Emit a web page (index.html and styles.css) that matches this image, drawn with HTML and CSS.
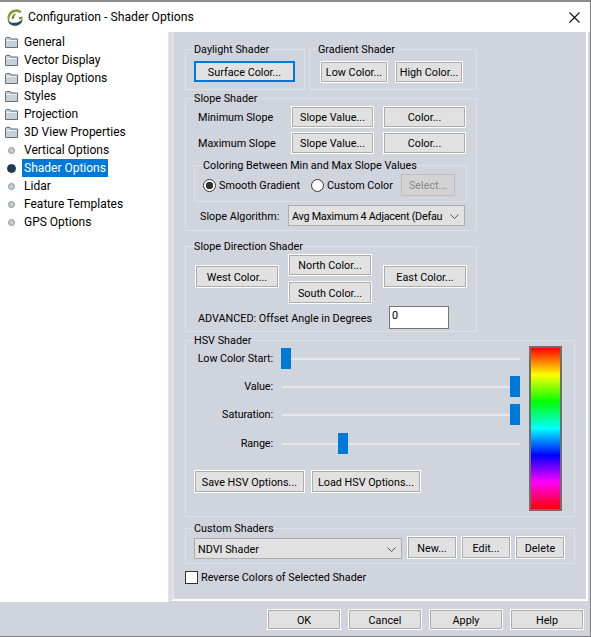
FILE: index.html
```html
<!DOCTYPE html>
<html lang="en">
<head>
<meta charset="utf-8">
<title>Configuration - Shader Options</title>
<link rel="stylesheet" href="styles.css">
</head>
<body>
<div class="window">
  <header class="titlebar">
    <svg class="logo" viewBox="0 0 16 17" width="16" height="17" aria-hidden="true">
      <path d="M10.5 0.2C5 -0.2 0.8 3.4 0.5 8.4 0.4 10.4 1.2 11.8 2.4 12.8 1.8 9.4 3.6 4 8 3.2 9.6 2.9 11.4 3.2 12.6 4.2L14.6 2.4C13.4 1.1 12 0.4 10.5 0.2Z" fill="#8a9a3c"/>
      <path d="M4.8 10.2C4.4 7.4 6.4 4.8 9.6 4.6 8.2 5.6 7 7.4 7 9.6L4.8 10.2Z" fill="#6f8a2c"/>
      <path d="M11.5 8.2L15.4 7.6C15.6 8.6 15.5 9.4 15.2 10.2L12.2 10.6C12.4 9.6 12.1 8.8 11.5 8.2Z" fill="#7c9434"/>
      <path d="M0.8 10.5C1.8 13.2 4.6 14 7.6 13.8 10.8 13.6 13.8 12.4 15.4 10 15.8 13.6 12.6 16.8 8 16.8 3.6 16.8 0.8 13.8 0.8 10.5Z" fill="#2d4a5c"/>
    </svg>
    <span class="title">Configuration - Shader Options</span>
    <svg class="close" viewBox="0 0 11 11" width="11" height="11" aria-hidden="true">
      <path d="M0.5 0.5L10.5 10.5M10.5 0.5L0.5 10.5" stroke="#111" stroke-width="1.1" fill="none"/>
    </svg>
  </header>
  <div class="main">
    <nav class="tree">
      <div class="node"><svg class="folder" viewBox="0 0 13 11" width="13" height="11" aria-hidden="true"><path d="M0.5 10.5V1.5Q0.5 0.5 1.5 0.5H5L6 2H12.5V10.5Z" fill="#c9d1d8" stroke="#5f6f78"/><path d="M1 3.5H12" stroke="#eef2f4"/></svg><span class="label">General</span></div>
      <div class="node"><svg class="folder" viewBox="0 0 13 11" width="13" height="11" aria-hidden="true"><path d="M0.5 10.5V1.5Q0.5 0.5 1.5 0.5H5L6 2H12.5V10.5Z" fill="#c9d1d8" stroke="#5f6f78"/><path d="M1 3.5H12" stroke="#eef2f4"/></svg><span class="label">Vector Display</span></div>
      <div class="node"><svg class="folder" viewBox="0 0 13 11" width="13" height="11" aria-hidden="true"><path d="M0.5 10.5V1.5Q0.5 0.5 1.5 0.5H5L6 2H12.5V10.5Z" fill="#c9d1d8" stroke="#5f6f78"/><path d="M1 3.5H12" stroke="#eef2f4"/></svg><span class="label">Display Options</span></div>
      <div class="node"><svg class="folder" viewBox="0 0 13 11" width="13" height="11" aria-hidden="true"><path d="M0.5 10.5V1.5Q0.5 0.5 1.5 0.5H5L6 2H12.5V10.5Z" fill="#c9d1d8" stroke="#5f6f78"/><path d="M1 3.5H12" stroke="#eef2f4"/></svg><span class="label">Styles</span></div>
      <div class="node"><svg class="folder" viewBox="0 0 13 11" width="13" height="11" aria-hidden="true"><path d="M0.5 10.5V1.5Q0.5 0.5 1.5 0.5H5L6 2H12.5V10.5Z" fill="#c9d1d8" stroke="#5f6f78"/><path d="M1 3.5H12" stroke="#eef2f4"/></svg><span class="label">Projection</span></div>
      <div class="node"><svg class="folder" viewBox="0 0 13 11" width="13" height="11" aria-hidden="true"><path d="M0.5 10.5V1.5Q0.5 0.5 1.5 0.5H5L6 2H12.5V10.5Z" fill="#c9d1d8" stroke="#5f6f78"/><path d="M1 3.5H12" stroke="#eef2f4"/></svg><span class="label">3D View Properties</span></div>
      <div class="node"><span class="bullet"></span><span class="label">Vertical Options</span></div>
      <div class="node"><span class="bullet bullet-on"></span><span class="label label-on">Shader Options</span></div>
      <div class="node"><span class="bullet"></span><span class="label">Lidar</span></div>
      <div class="node"><span class="bullet"></span><span class="label">Feature Templates</span></div>
      <div class="node"><span class="bullet"></span><span class="label">GPS Options</span></div>
    </nav>
    <section class="panel">
      <div class="top-row">
        <fieldset class="group daylight">
          <legend>Daylight Shader</legend>
          <button class="btn btn-focus surface">Surface Color...</button>
        </fieldset>
        <fieldset class="group gradient">
          <legend>Gradient Shader</legend>
          <div class="gradient-row">
            <button class="btn low">Low Color...</button>
            <button class="btn high">High Color...</button>
          </div>
        </fieldset>
      </div>

      <fieldset class="group slope">
        <legend>Slope Shader</legend>
        <div class="slope-row">
          <span class="slope-label">Minimum Slope</span>
          <button class="btn slope-btn">Slope Value...</button>
          <button class="btn slope-btn">Color...</button>
        </div>
        <div class="slope-row">
          <span class="slope-label">Maximum Slope</span>
          <button class="btn slope-btn">Slope Value...</button>
          <button class="btn slope-btn">Color...</button>
        </div>
        <fieldset class="group between">
          <legend>Coloring Between Min and Max Slope Values</legend>
          <div class="radio-row">
            <label class="radio-item first"><span class="radio radio-on"></span>Smooth Gradient</label>
            <label class="radio-item second"><span class="radio"></span>Custom Color</label>
            <button class="btn btn-off select-btn">Select...</button>
          </div>
        </fieldset>
        <div class="algo-row">
          <span class="algo-label">Slope Algorithm:</span>
          <div class="combo algo-combo"><span class="combo-text">Avg Maximum 4 Adjacent (Defau</span><svg class="chev" viewBox="0 0 9 5" width="9" height="5" aria-hidden="true"><path d="M0.5 0.5L4.5 4.5L8.5 0.5" fill="none" stroke="#555"/></svg></div>
        </div>
      </fieldset>

      <fieldset class="group direction">
        <legend>Slope Direction Shader</legend>
        <div class="compass">
          <button class="btn dir-btn west">West Color...</button>
          <div class="compass-mid">
            <button class="btn dir-btn north">North Color...</button>
            <button class="btn dir-btn south">South Color...</button>
          </div>
          <button class="btn dir-btn east">East Color...</button>
        </div>
        <div class="advanced">
          <span class="advanced-label">ADVANCED: Offset Angle in Degrees</span>
          <div class="input">0</div>
        </div>
      </fieldset>

      <fieldset class="group hsv">
        <legend>HSV Shader</legend>
        <div class="hsv-body">
          <div class="hsv-left">
            <div class="slider-row"><span class="slider-label">Low Color Start:</span><div class="slider"><span class="thumb" style="left:-1px"></span></div></div>
            <div class="slider-row"><span class="slider-label">Value:</span><div class="slider"><span class="thumb" style="left:228px"></span></div></div>
            <div class="slider-row"><span class="slider-label">Saturation:</span><div class="slider"><span class="thumb" style="left:228px"></span></div></div>
            <div class="slider-row range-row"><span class="slider-label">Range:</span><div class="slider"><span class="thumb" style="left:56px"></span></div></div>
            <div class="hsv-buttons">
              <button class="btn save">Save HSV Options...</button>
              <button class="btn load">Load HSV Options...</button>
            </div>
          </div>
          <div class="spectrum"></div>
        </div>
      </fieldset>

      <fieldset class="group custom">
        <legend>Custom Shaders</legend>
        <div class="custom-row">
          <div class="combo custom-combo"><span class="combo-text">NDVI Shader</span><svg class="chev" viewBox="0 0 9 5" width="9" height="5" aria-hidden="true"><path d="M0.5 0.5L4.5 4.5L8.5 0.5" fill="none" stroke="#555"/></svg></div>
          <button class="btn small">New...</button>
          <button class="btn small">Edit...</button>
          <button class="btn small">Delete</button>
        </div>
      </fieldset>

      <label class="reverse"><span class="checkbox"></span>Reverse Colors of Selected Shader</label>
    </section>
  </div>
  <footer class="footer">
    <button class="btn foot-btn">OK</button>
    <button class="btn foot-btn">Cancel</button>
    <button class="btn foot-btn">Apply</button>
    <button class="btn foot-btn">Help</button>
  </footer>
</div>
</body>
</html>
```

FILE: styles.css
```css
* { box-sizing: border-box; }
html, body { margin: 0; padding: 0; background: #fff; }
body, button, legend {
  font-family: Roboto, "Noto Sans", "Liberation Sans", sans-serif;
  color: #000;
}
.panel, .panel button, .panel legend, .footer button { font-size: 10.8px; }
.window {
  width: 591px;
  height: 637px;
  display: flex;
  flex-direction: column;
  background: #d0d4dd;
  border-right: 1px solid #808080;
  border-bottom: 1px solid #808080;
  overflow: hidden;
}
.titlebar {
  height: 32px;
  flex: none;
  background: #fff;
  border-top: 2px solid #8a8a8a;
  display: flex;
  align-items: center;
  padding: 0 10px 0 7px;
}
.logo { flex: none; }
.title { margin-left: 5px; font-size: 12.2px; flex: 1; }
.close { flex: none; }
.main { height: 570px; flex: none; display: flex; }
.tree {
  width: 170px;
  flex: none;
  background: #fff;
  border-right: 2px solid #e3e3e3;
  padding: 1px 0 0 5px;
  font-size: 12px;
}
.node { height: 18px; display: flex; align-items: center; }
.folder { flex: none; margin-right: 4px; }
.label { padding: 0 2px; height: 18px; line-height: 18px; white-space: nowrap; }
.label-on { background: #0078d7; color: #fff; }
.bullet {
  width: 7px;
  height: 7px;
  margin: 0 7px 0 3px;
  flex: none;
  border-radius: 50%;
  background: #c4cad0;
  border: 1px solid #8d979f;
}
.bullet-on {
  width: 9px;
  height: 9px;
  margin: 0 6px 0 2px;
  background: #1d3b55;
  border-color: #1d3b55;
}
.panel {
  flex: 1;
  margin-left: 1px;
  margin-bottom: 1px;
  border-left: 3px solid #dfe2e8;
  border-right: 2px solid #fff;
  border-bottom: 2px solid #fff;
  margin-right: 2px;
  padding: 9px 0 0 11px;
}
.group {
  margin: 0;
  padding: 0;
  min-width: 0;
  border: 1px solid #dde0e6;
}
legend {
  padding: 0;
  margin-left: 8px;
  height: 16px;
  line-height: 18px;
  white-space: nowrap;
}
.btn {
  margin: 0;
  padding: 1px 0 0;
  display: block;
  flex: none;
  background: #e1e1e1;
  border: 1px solid #fff;
  box-shadow: inset 0 0 0 1px #adadad;
  text-align: center;
  white-space: nowrap;
  overflow: hidden;
}
.btn-focus { border: 2px solid #0078d7; box-shadow: none; }
.btn-off { background: #d3d3d3; border-color: #bdbdbd; box-shadow: none; color: #8a8a8a; }
.top-row { display: flex; gap: 4px; }
.daylight { width: 120px; height: 49px; }
.gradient { width: 168px; height: 49px; }
.surface { width: 101px; height: 21px; margin: 4px 0 0 8px; }
.gradient-row { display: flex; gap: 7px; margin: 4px 0 0 10px; }
.low { width: 68px; height: 22px; }
.high { width: 68px; height: 22px; }
.slope { width: 292px; height: 141px; }
.slope-row { display: flex; height: 22px; margin-bottom: 4px; align-items: center; }
.slope-label { width: 105px; padding: 1px 0 0 12px; flex: none; white-space: nowrap; }
.slope-btn { width: 83px; height: 22px; margin-right: 9px; }
.between { width: 273px; height: 45px; margin: -1px 0 0 8px; }
.radio-row { display: flex; align-items: center; height: 22px; margin-top: 1px; padding-left: 8px; }
.radio-item { display: flex; align-items: center; white-space: nowrap; }
.first { width: 108px; }
.second { width: 90px; }
.radio {
  width: 13px;
  height: 13px;
  flex: none;
  margin-right: 3px;
  border-radius: 50%;
  background: #fff;
  border: 1px solid #333;
}
.radio-on { background: radial-gradient(circle, #333 0 3.5px, #fff 4px); }
.select-btn { width: 54px; height: 22px; }
.algo-row { display: flex; align-items: center; margin-top: 3px; height: 21px; }
.algo-label { width: 102px; padding: 1px 0 0 14px; flex: none; white-space: nowrap; }
.combo {
  display: flex;
  align-items: center;
  flex: none;
  height: 21px;
  background: #e1e1e1;
  border: 1px solid #adadad;
  padding: 1px 5px 0 3px;
  overflow: hidden;
}
.combo-text { flex: 1; min-width: 0; white-space: nowrap; }
.chev { flex: none; margin-left: 5px; }
.algo-combo { width: 177px; letter-spacing: -0.25px; }
.direction { width: 292px; height: 94px; margin-top: 7px; }
.compass { display: flex; padding-left: 9px; }
.compass-mid { display: flex; flex-direction: column; gap: 5px; margin: 0 11px 0 9px; }
.dir-btn { width: 84px; height: 23px; }
.west, .east { margin-top: 11px; }
.north { height: 22px; }
.advanced { display: flex; align-items: center; margin-top: 2px; }
.advanced-label { width: 203px; padding: 1px 0 0 12px; flex: none; white-space: nowrap; }
.input {
  width: 60px;
  height: 23px;
  flex: none;
  background: #fff;
  border: 1px solid #767676;
  padding-left: 2px;
  line-height: 18px;
}
.hsv { width: 390px; height: 185px; }
.hsv-body { display: flex; }
.hsv-left { width: 343px; flex: none; display: flex; flex-direction: column; gap: 7px; }
.slider-row { display: flex; align-items: center; height: 21px; }
.range-row { margin-top: 1px; }
.slider-label { width: 87px; flex: none; text-align: right; white-space: nowrap; letter-spacing: -0.1px; }
.slider {
  position: relative;
  width: 238px;
  height: 2px;
  margin-left: 9px;
  background: #e4e6ea;
}
.thumb {
  position: absolute;
  top: -10px;
  width: 10px;
  height: 21px;
  background: #0078d7;
}
.hsv-buttons { display: flex; gap: 6px; margin: 9px 0 0 8px; }
.save { width: 111px; height: 23px; }
.load { width: 110px; height: 23px; }
.spectrum {
  width: 33px;
  height: 165px;
  margin-top: -2px;
  flex: none;
  border: 2px solid #6e6e6e;
  background: linear-gradient(#f00, #ff0, #0f0, #0ff, #00f, #f0f, #f00);
}
.custom { width: 390px; height: 44px; margin-top: 3px; }
.custom-row { display: flex; align-items: flex-start; padding-left: 8px; gap: 4px; }
.custom-combo { width: 208px; margin-top: 2px; margin-right: 1px; }
.small { width: 50px; height: 23px; }
.reverse { display: flex; align-items: center; margin-top: 7px; white-space: nowrap; }
.checkbox {
  width: 13px;
  height: 13px;
  flex: none;
  margin-right: 3px;
  background: #fff;
  border: 1px solid #333;
}
.footer {
  flex: 1;
  display: flex;
  justify-content: flex-end;
  gap: 7px;
  padding: 7px 6px 0 0;
}
.foot-btn { width: 74px; height: 21px; }
```
